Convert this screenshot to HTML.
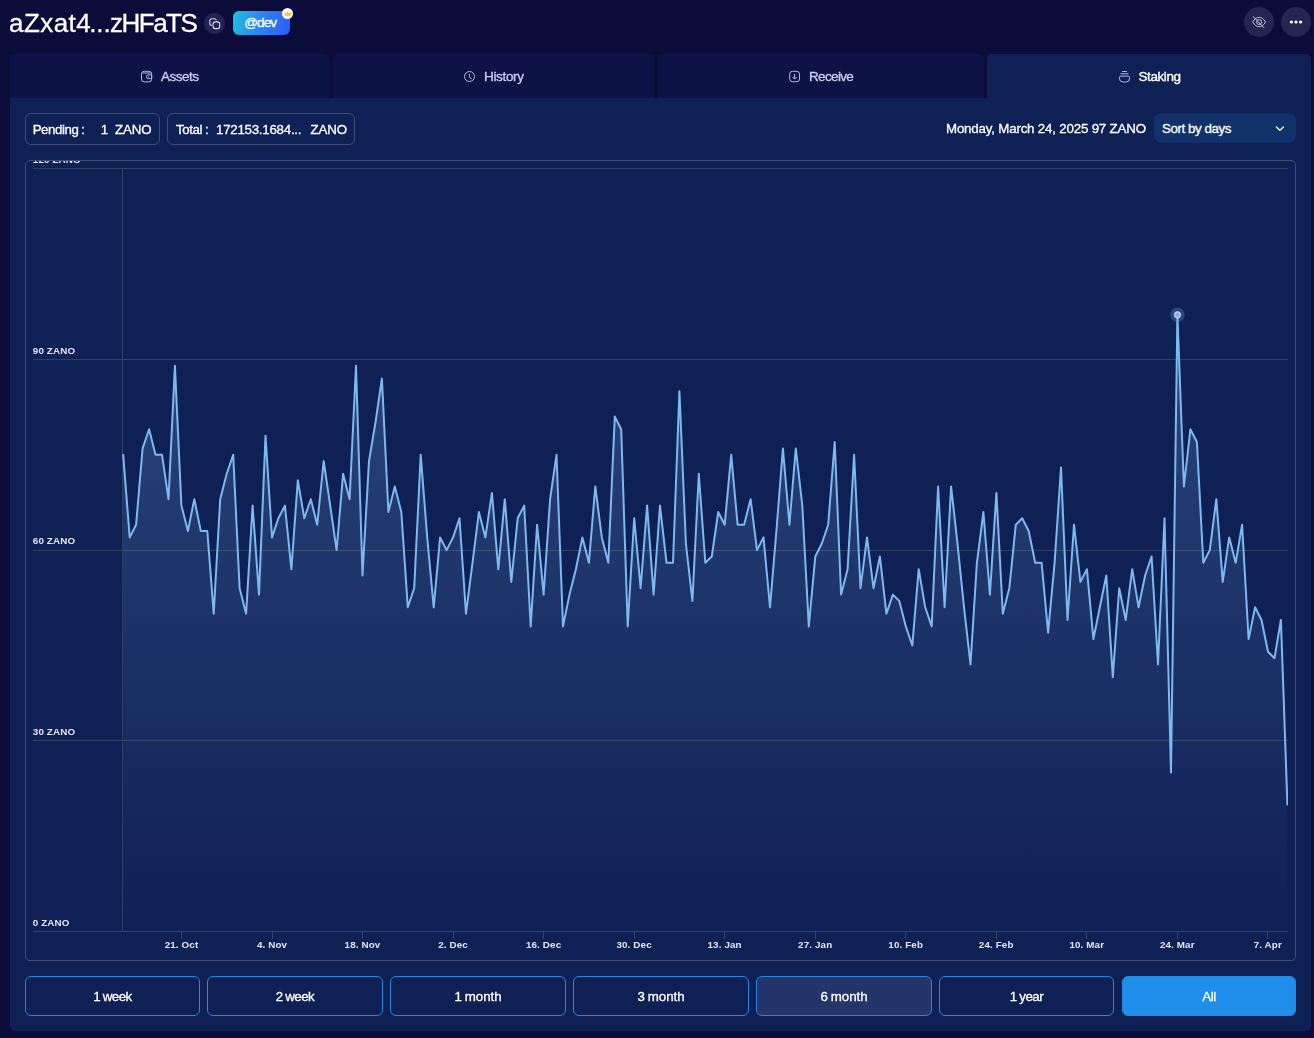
<!DOCTYPE html>
<html lang="en">
<head>
<meta charset="utf-8">
<title>Zano Wallet - Staking</title>
<style>
*{box-sizing:border-box;margin:0;padding:0}
html,body{width:1314px;height:1038px;overflow:hidden;background:#0c0c3a;font-family:"Liberation Sans",Arial,sans-serif;color:#fff}
.abs{position:absolute}
#root{position:absolute;left:0;top:0;width:1314px;height:1038px;transform:translateZ(0)}
.title{left:9px;top:5.5px;font-size:26px;line-height:34px;white-space:nowrap;-webkit-text-stroke:.3px #fff;transform:translateZ(0)}
.copy{left:204.2px;top:13.2px;width:20.6px;height:20.6px;border-radius:50%;background:#222350}
.badge{left:233px;top:11px;width:57px;height:24px;border-radius:6px;background:linear-gradient(105deg,#1fc4de 0%,#2a8df0 40%,#2f58f6 100%);font-size:13.5px;line-height:24px;text-align:center;letter-spacing:-0.9px;-webkit-text-stroke:.3px #fff;padding-right:2.5px}
.crown{left:282px;top:8px;width:11.4px;height:11.4px;border-radius:50%;background:#fff}
.rbtn{top:7px;width:30px;height:30px;border-radius:50%;background:#242550}
.tab{top:54px;height:50px;border-radius:5px 5px 0 0;background:#0d1347;font-size:13.5px;line-height:44px;color:#c8cbea;white-space:nowrap;-webkit-text-stroke:.35px #c8cbea}
.tab span{position:absolute;top:0;transform:translateY(.7px)}
.tab svg{position:absolute}
.tab.active{background:#0f2055;color:#fff;-webkit-text-stroke:.35px #fff}
.panel{left:10px;top:98px;width:1301px;height:933px;background:#0f2055;border-radius:0 0 6px 6px}
.pill{top:113px;height:32px;border:1px solid rgba(255,255,255,.2);border-radius:6px;font-size:13.3px;line-height:31.4px;white-space:nowrap;-webkit-text-stroke:.3px #fff}
.pill span{position:absolute;top:0}
.date{top:113px;font-size:13.3px;line-height:31.4px;white-space:nowrap;letter-spacing:-0.18px;word-spacing:0;-webkit-text-stroke:.3px #fff}
.select{left:1154px;top:113px;width:142px;height:30px;border-radius:8px;background:#11316b;font-size:13.3px;line-height:31.4px;padding-left:8px;letter-spacing:-0.4px;word-spacing:0;-webkit-text-stroke:.3px #fff}
.chart{left:25px;top:160px;width:1271px;height:801px;border:1px solid rgba(255,255,255,.2);border-radius:5px;overflow:hidden}
.btn{top:976px;height:40px;border:1px solid #2488e2;border-radius:6px;font-size:13.3px;line-height:39.4px;text-align:center;letter-spacing:-0.5px;word-spacing:-.6px;-webkit-text-stroke:.3px #fff}
.btn.m{letter-spacing:-.05px}
.btn.hover{background:#25356c}
.btn.on{background:#1f8feb}
svg{display:block}
svg text{font-family:"Liberation Sans",Arial,sans-serif;font-weight:bold;font-size:9.8px;letter-spacing:.14px;fill:#e3e6f1}
</style>
</head>
<body>
<div id="root">
<div class="abs title"><span style="letter-spacing:.45px">aZxat4</span><span style="letter-spacing:-.1px;margin-left:-2px">...</span><span style="letter-spacing:-1.5px;margin-left:-.6px">zHFaTS</span></div>
<div class="abs copy"><svg width="20.6" height="20.6" viewBox="0 0 20.6 20.6" fill="none" stroke="#d6d6f2" stroke-width="1.1"><rect x="9" y="8.9" width="6.7" height="6.7" rx="2.3"/><path d="M7.9 12.5A2.2 2.2 0 0 1 5.8 10.3V8A2.2 2.2 0 0 1 8 5.8H10.3A2.2 2.2 0 0 1 12.4 7.4"/></svg></div>
<div class="abs badge">@dev</div>
<div class="abs crown"><svg width="11.4" height="11.4" viewBox="0 0 11.4 11.4"><path d="M2.7 7.8L2.4 4.2L4.2 5.5L5.7 3.2L7.2 5.5L9 4.2L8.7 7.8Z" fill="#f6c231"/></svg></div>
<div class="abs rbtn" style="left:1244px"><svg width="30" height="30" viewBox="0 0 30 30" fill="none" stroke="#b9b9dc" stroke-width="1"><path d="M8.6 15C10.6 11.8 12.8 10.3 15.1 10.3S19.6 11.8 21.6 15C19.6 18.2 17.4 19.7 15.1 19.7S10.6 18.2 8.6 15Z"/><circle cx="15.1" cy="15" r="2.5"/><path d="M9 9.3L20 20.8" stroke="#c9c9e6"/></svg></div>
<div class="abs rbtn" style="left:1281px"><svg width="30" height="30" viewBox="0 0 30 30" fill="#fff"><circle cx="10.4" cy="15" r="1.6"/><circle cx="15" cy="15" r="1.6"/><circle cx="19.6" cy="15" r="1.6"/></svg></div>

<div class="abs tab" style="left:10px;width:319px"><svg style="left:130px;top:15.5px" width="13" height="13" viewBox="0 0 13 13" fill="none" stroke="#b6badf" stroke-width="1"><rect x="1.5" y="1.3" width="10.2" height="10.6" rx="2.8"/><path d="M2.6 3H10.6"/><rect x="6.6" y="4.8" width="5.1" height="3.8" rx="1.5"/><circle cx="8.7" cy="6.7" r=".6" fill="#b6badf" stroke="none"/></svg><span style="left:151px;letter-spacing:-0.5px">Assets</span></div>
<div class="abs tab" style="left:333px;width:321px"><svg style="left:130px;top:15.5px" width="13" height="13" viewBox="0 0 13 13" fill="none" stroke="#b6badf" stroke-width="1"><circle cx="6.5" cy="6.5" r="5"/><path d="M6.4 3.8V6.9L8.6 8.7"/></svg><span style="left:151px;letter-spacing:-0.33px">History</span></div>
<div class="abs tab" style="left:658px;width:326px"><svg style="left:130px;top:15.5px" width="13" height="13" viewBox="0 0 13 13" fill="none" stroke="#b6badf" stroke-width="1"><rect x="1.7" y="1.3" width="9.8" height="10.4" rx="2.8"/><path d="M6.6 3.8V9M4.4 6.9L6.6 9.1L8.8 6.9"/></svg><span style="left:151px;letter-spacing:-0.65px">Receive</span></div>
<div class="abs tab active" style="left:987px;width:324px"><svg style="left:130.5px;top:15.5px" width="13" height="13" viewBox="0 0 13 13" fill="none" stroke="#b3b9e2" stroke-width="1"><path d="M4.1 1.5H8.9M2.5 3.8H10.5"/><path d="M2.9 6.1H10.1A1.6 1.6 0 0 1 11.7 7.7V8.1A4 4 0 0 1 7.7 12.1H5.3A4 4 0 0 1 1.3 8.1V7.7A1.6 1.6 0 0 1 2.9 6.1Z"/></svg><span style="left:151.5px;letter-spacing:-0.42px">Staking</span></div>
<div class="abs panel"></div>

<div class="abs pill" style="left:25px;width:135px"><span style="left:6.7px;letter-spacing:-0.44px;word-spacing:-.4px">Pending :</span><span style="left:74.8px">1</span><span style="left:89px;letter-spacing:-0.1px">ZANO</span></div>
<div class="abs pill" style="left:167px;width:188px"><span style="left:8px;letter-spacing:-0.4px;word-spacing:-.4px">Total :</span><span style="left:48px;letter-spacing:-0.25px">172153.1684...</span><span style="left:142.5px;letter-spacing:-0.1px">ZANO</span></div>
<div class="abs date" style="left:946px">Monday, March 24, 2025 97 ZANO</div>
<div class="abs select">Sort by days<svg style="position:absolute;left:120px;top:12.4px" width="12" height="8" viewBox="0 0 12 8" fill="none" stroke="#fff" stroke-width="1.3" stroke-linecap="round" stroke-linejoin="round"><path d="M2.4 2L5.9 5.4L9.4 2"/></svg></div>

<div class="abs chart">
<svg width="1269" height="799" viewBox="26 161 1269 799">
<defs>
<linearGradient id="g" x1="0" y1="315" x2="0" y2="931" gradientUnits="userSpaceOnUse">
<stop offset="0" stop-color="#7cb5ec" stop-opacity="0.25"/>
<stop offset="1" stop-color="#7cb5ec" stop-opacity="0"/>
</linearGradient>
<clipPath id="c"><rect x="122" y="161" width="1166" height="771"/></clipPath>
</defs>
<g stroke="#2f4060" stroke-width="1" shape-rendering="crispEdges">
<line x1="33" y1="168.5" x2="1288" y2="168.5"/>
<line x1="33" y1="359.5" x2="1288" y2="359.5"/>
<line x1="33" y1="550.5" x2="1288" y2="550.5"/>
<line x1="33" y1="740.5" x2="1288" y2="740.5"/>
<line x1="33" y1="931.5" x2="1288" y2="931.5" stroke="#33455f"/>
<line x1="122.5" y1="168" x2="122.5" y2="932"/>
<line x1="181.5" y1="932" x2="181.5" y2="938.5" stroke="#33455f"/>
<line x1="272.5" y1="932" x2="272.5" y2="938.5" stroke="#33455f"/>
<line x1="362.5" y1="932" x2="362.5" y2="938.5" stroke="#33455f"/>
<line x1="453.5" y1="932" x2="453.5" y2="938.5" stroke="#33455f"/>
<line x1="543.5" y1="932" x2="543.5" y2="938.5" stroke="#33455f"/>
<line x1="634.5" y1="932" x2="634.5" y2="938.5" stroke="#33455f"/>
<line x1="724.5" y1="932" x2="724.5" y2="938.5" stroke="#33455f"/>
<line x1="815.5" y1="932" x2="815.5" y2="938.5" stroke="#33455f"/>
<line x1="905.5" y1="932" x2="905.5" y2="938.5" stroke="#33455f"/>
<line x1="996.5" y1="932" x2="996.5" y2="938.5" stroke="#33455f"/>
<line x1="1086.5" y1="932" x2="1086.5" y2="938.5" stroke="#33455f"/>
<line x1="1177.5" y1="932" x2="1177.5" y2="938.5" stroke="#33455f"/>
<line x1="1267.5" y1="932" x2="1267.5" y2="938.5" stroke="#33455f"/>
</g>
<g clip-path="url(#c)">
<path d="M123.2 454.8 L129.7 537.4 L136.1 524.7 L142.6 448.4 L149.1 429.3 L155.5 454.8 L162.0 454.8 L168.5 499.2 L174.9 365.8 L181.4 505.6 L187.9 531.0 L194.3 499.2 L200.8 531.0 L207.3 531.0 L213.7 613.7 L220.2 499.2 L226.7 473.8 L233.2 454.8 L239.6 588.2 L246.1 613.7 L252.6 505.6 L259.0 594.6 L265.5 435.7 L272.0 537.4 L278.4 518.3 L284.9 505.6 L291.4 569.2 L297.8 480.2 L304.3 518.3 L310.8 499.2 L317.2 524.7 L323.7 461.1 L330.2 505.6 L336.6 550.1 L343.1 473.8 L349.6 499.2 L356.0 365.8 L362.5 575.5 L369.0 461.1 L375.4 423.0 L381.9 378.5 L388.4 512.0 L394.8 486.5 L401.3 512.0 L407.8 607.3 L414.2 588.2 L420.7 454.8 L427.2 537.4 L433.7 607.3 L440.1 537.4 L446.6 550.1 L453.1 537.4 L459.5 518.3 L466.0 613.7 L472.5 562.8 L478.9 512.0 L485.4 537.4 L491.9 492.9 L498.3 569.2 L504.8 499.2 L511.3 581.9 L517.7 518.3 L524.2 505.6 L530.7 626.4 L537.1 524.7 L543.6 594.6 L550.1 499.2 L556.5 454.8 L563.0 626.4 L569.5 594.6 L575.9 569.2 L582.4 537.4 L588.9 562.8 L595.3 486.5 L601.8 537.4 L608.3 562.8 L614.8 416.6 L621.2 429.3 L627.7 626.4 L634.2 518.3 L640.6 588.2 L647.1 505.6 L653.6 594.6 L660.0 505.6 L666.5 562.8 L673.0 562.8 L679.4 391.2 L685.9 543.7 L692.4 601.0 L698.8 473.8 L705.3 562.8 L711.8 556.5 L718.2 512.0 L724.7 524.7 L731.2 454.8 L737.6 524.7 L744.1 524.7 L750.6 499.2 L757.0 550.1 L763.5 537.4 L770.0 607.3 L776.4 531.0 L782.9 448.4 L789.4 524.7 L795.8 448.4 L802.3 505.6 L808.8 626.4 L815.3 556.5 L821.7 543.7 L828.2 524.7 L834.7 442.0 L841.1 594.6 L847.6 569.2 L854.1 454.8 L860.5 588.2 L867.0 537.4 L873.5 588.2 L879.9 556.5 L886.4 613.7 L892.9 594.6 L899.3 601.0 L905.8 626.4 L912.3 645.5 L918.7 569.2 L925.2 607.3 L931.7 626.4 L938.1 486.5 L944.6 607.3 L951.1 486.5 L957.5 543.7 L964.0 607.3 L970.5 664.5 L976.9 562.8 L983.4 512.0 L989.9 594.6 L996.4 492.9 L1002.8 613.7 L1009.3 588.2 L1015.8 524.7 L1022.2 518.3 L1028.7 531.0 L1035.2 562.8 L1041.6 562.8 L1048.1 632.7 L1054.6 562.8 L1061.0 467.5 L1067.5 620.0 L1074.0 524.7 L1080.4 581.9 L1086.9 569.2 L1093.4 639.1 L1099.8 607.3 L1106.3 575.5 L1112.8 677.2 L1119.2 588.2 L1125.7 620.0 L1132.2 569.2 L1138.6 607.3 L1145.1 575.5 L1151.6 556.5 L1158.0 664.5 L1164.5 518.3 L1171.0 772.6 L1177.4 314.9 L1183.9 486.5 L1190.4 429.3 L1196.9 442.0 L1203.3 562.8 L1209.8 550.1 L1216.3 499.2 L1222.7 581.9 L1229.2 537.4 L1235.7 562.8 L1242.1 524.7 L1248.6 639.1 L1255.1 607.3 L1261.5 620.0 L1268.0 651.8 L1274.5 658.2 L1280.9 620.0 L1287.4 804.4 L1287.4 931.5 L123.2 931.5 Z" fill="url(#g)"/>
<path d="M123.2 454.8 L129.7 537.4 L136.1 524.7 L142.6 448.4 L149.1 429.3 L155.5 454.8 L162.0 454.8 L168.5 499.2 L174.9 365.8 L181.4 505.6 L187.9 531.0 L194.3 499.2 L200.8 531.0 L207.3 531.0 L213.7 613.7 L220.2 499.2 L226.7 473.8 L233.2 454.8 L239.6 588.2 L246.1 613.7 L252.6 505.6 L259.0 594.6 L265.5 435.7 L272.0 537.4 L278.4 518.3 L284.9 505.6 L291.4 569.2 L297.8 480.2 L304.3 518.3 L310.8 499.2 L317.2 524.7 L323.7 461.1 L330.2 505.6 L336.6 550.1 L343.1 473.8 L349.6 499.2 L356.0 365.8 L362.5 575.5 L369.0 461.1 L375.4 423.0 L381.9 378.5 L388.4 512.0 L394.8 486.5 L401.3 512.0 L407.8 607.3 L414.2 588.2 L420.7 454.8 L427.2 537.4 L433.7 607.3 L440.1 537.4 L446.6 550.1 L453.1 537.4 L459.5 518.3 L466.0 613.7 L472.5 562.8 L478.9 512.0 L485.4 537.4 L491.9 492.9 L498.3 569.2 L504.8 499.2 L511.3 581.9 L517.7 518.3 L524.2 505.6 L530.7 626.4 L537.1 524.7 L543.6 594.6 L550.1 499.2 L556.5 454.8 L563.0 626.4 L569.5 594.6 L575.9 569.2 L582.4 537.4 L588.9 562.8 L595.3 486.5 L601.8 537.4 L608.3 562.8 L614.8 416.6 L621.2 429.3 L627.7 626.4 L634.2 518.3 L640.6 588.2 L647.1 505.6 L653.6 594.6 L660.0 505.6 L666.5 562.8 L673.0 562.8 L679.4 391.2 L685.9 543.7 L692.4 601.0 L698.8 473.8 L705.3 562.8 L711.8 556.5 L718.2 512.0 L724.7 524.7 L731.2 454.8 L737.6 524.7 L744.1 524.7 L750.6 499.2 L757.0 550.1 L763.5 537.4 L770.0 607.3 L776.4 531.0 L782.9 448.4 L789.4 524.7 L795.8 448.4 L802.3 505.6 L808.8 626.4 L815.3 556.5 L821.7 543.7 L828.2 524.7 L834.7 442.0 L841.1 594.6 L847.6 569.2 L854.1 454.8 L860.5 588.2 L867.0 537.4 L873.5 588.2 L879.9 556.5 L886.4 613.7 L892.9 594.6 L899.3 601.0 L905.8 626.4 L912.3 645.5 L918.7 569.2 L925.2 607.3 L931.7 626.4 L938.1 486.5 L944.6 607.3 L951.1 486.5 L957.5 543.7 L964.0 607.3 L970.5 664.5 L976.9 562.8 L983.4 512.0 L989.9 594.6 L996.4 492.9 L1002.8 613.7 L1009.3 588.2 L1015.8 524.7 L1022.2 518.3 L1028.7 531.0 L1035.2 562.8 L1041.6 562.8 L1048.1 632.7 L1054.6 562.8 L1061.0 467.5 L1067.5 620.0 L1074.0 524.7 L1080.4 581.9 L1086.9 569.2 L1093.4 639.1 L1099.8 607.3 L1106.3 575.5 L1112.8 677.2 L1119.2 588.2 L1125.7 620.0 L1132.2 569.2 L1138.6 607.3 L1145.1 575.5 L1151.6 556.5 L1158.0 664.5 L1164.5 518.3 L1171.0 772.6 L1177.4 314.9 L1183.9 486.5 L1190.4 429.3 L1196.9 442.0 L1203.3 562.8 L1209.8 550.1 L1216.3 499.2 L1222.7 581.9 L1229.2 537.4 L1235.7 562.8 L1242.1 524.7 L1248.6 639.1 L1255.1 607.3 L1261.5 620.0 L1268.0 651.8 L1274.5 658.2 L1280.9 620.0 L1287.4 804.4" fill="none" stroke="#7db9f0" stroke-width="2" stroke-linejoin="round" stroke-linecap="round"/>
</g>
<circle cx="1177.5" cy="314.8" r="7.2" fill="#7db9f0" fill-opacity="0.25"/>
<circle cx="1177.5" cy="314.8" r="3.1" fill="#7eb4e8" stroke="#dfeaf8" stroke-width="1"/>
<text x="32.8" y="162.6">120 ZANO</text>
<text x="32.8" y="353.5">90 ZANO</text>
<text x="32.8" y="544">60 ZANO</text>
<text x="32.8" y="734.5">30 ZANO</text>
<text x="32.8" y="925.5">0 ZANO</text>
<g text-anchor="middle">
<text x="181.5" y="948">21. Oct</text>
<text x="272.0" y="948">4. Nov</text>
<text x="362.5" y="948">18. Nov</text>
<text x="453.1" y="948">2. Dec</text>
<text x="543.6" y="948">16. Dec</text>
<text x="634.1" y="948">30. Dec</text>
<text x="724.6" y="948">13. Jan</text>
<text x="815.2" y="948">27. Jan</text>
<text x="905.7" y="948">10. Feb</text>
<text x="996.2" y="948">24. Feb</text>
<text x="1086.8" y="948">10. Mar</text>
<text x="1177.3" y="948">24. Mar</text>
<text x="1267.8" y="948">7. Apr</text>
</g>
</svg>
</div>

<div class="abs btn" style="left:25px;width:175px">1 week</div>
<div class="abs btn" style="left:207px;width:176px">2 week</div>
<div class="abs btn m" style="left:390px;width:176px">1 month</div>
<div class="abs btn m" style="left:573px;width:176px">3 month</div>
<div class="abs btn m hover" style="left:756px;width:176px">6 month</div>
<div class="abs btn" style="left:939px;width:175px">1 year</div>
<div class="abs btn on" style="left:1122px;width:174px">All</div>
</div>
</body>
</html>
